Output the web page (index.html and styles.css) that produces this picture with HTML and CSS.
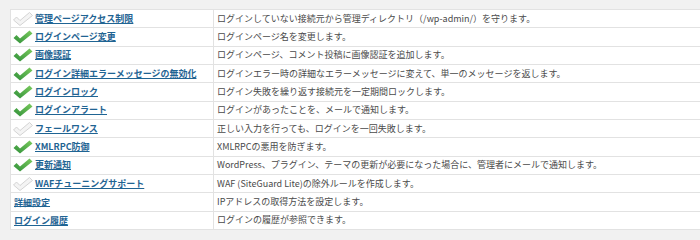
FILE: index.html
```html
<!DOCTYPE html>
<html lang="ja">
<head>
<meta charset="utf-8">
<link rel="stylesheet" href="styles.css">
</head>
<body>
<svg width="0" height="0" class="defs">
  <defs>
    <linearGradient id="g" x1="0" y1="1" x2="1" y2="0">
      <stop offset="0" stop-color="#2f8f3a"/>
      <stop offset="1" stop-color="#7acb5c"/>
    </linearGradient>
    <symbol id="chk" viewBox="0 0 20 14">
      <polygon points="0.5,8 3.5,5 7,8.5 16.5,0.5 19.5,3.5 7,13.5"/>
    </symbol>
  </defs>
</svg>
<div class="wrap">
<table class="feat">
  <tr><td class="name"><svg class="ic off"><use href="#chk"/></svg><a href="#">管理ページアクセス制限</a></td><td class="desc">ログインしていない接続元から管理ディレクトリ（/wp-admin/）を守ります。</td></tr>
  <tr><td class="name"><svg class="ic on"><use href="#chk"/></svg><a href="#">ログインページ変更</a></td><td class="desc">ログインページ名を変更します。</td></tr>
  <tr><td class="name"><svg class="ic on"><use href="#chk"/></svg><a href="#">画像認証</a></td><td class="desc">ログインページ、コメント投稿に画像認証を追加します。</td></tr>
  <tr><td class="name"><svg class="ic on"><use href="#chk"/></svg><a href="#">ログイン詳細エラーメッセージの無効化</a></td><td class="desc">ログインエラー時の詳細なエラーメッセージに変えて、単一のメッセージを返します。</td></tr>
  <tr><td class="name"><svg class="ic on"><use href="#chk"/></svg><a href="#">ログインロック</a></td><td class="desc">ログイン失敗を繰り返す接続元を一定期間ロックします。</td></tr>
  <tr><td class="name"><svg class="ic on"><use href="#chk"/></svg><a href="#">ログインアラート</a></td><td class="desc">ログインがあったことを、メールで通知します。</td></tr>
  <tr><td class="name"><svg class="ic off"><use href="#chk"/></svg><a href="#">フェールワンス</a></td><td class="desc">正しい入力を行っても、ログインを一回失敗します。</td></tr>
  <tr><td class="name"><svg class="ic on"><use href="#chk"/></svg><a href="#">XMLRPC防御</a></td><td class="desc">XMLRPCの悪用を防ぎます。</td></tr>
  <tr><td class="name"><svg class="ic on"><use href="#chk"/></svg><a href="#">更新通知</a></td><td class="desc">WordPress、プラグイン、テーマの更新が必要になった場合に、管理者にメールで通知します。</td></tr>
  <tr><td class="name"><svg class="ic off"><use href="#chk"/></svg><a href="#">WAFチューニングサポート</a></td><td class="desc">WAF (SiteGuard Lite)の除外ルールを作成します。</td></tr>
  <tr><td class="name plain"><a href="#">詳細設定</a></td><td class="desc">IPアドレスの取得方法を設定します。</td></tr>
  <tr><td class="name plain"><a href="#">ログイン履歴</a></td><td class="desc">ログインの履歴が参照できます。</td></tr>
</table>
</div>
</body>
</html>
```
FILE: styles.css
```css
html, body {
  margin: 0;
  padding: 0;
  background: #f1f1f1;
  overflow: hidden;
}
.defs {
  position: absolute;
}
.wrap {
  padding: 9px 0 0 10px;
  font-family: "Noto Sans CJK JP", "Noto Sans", sans-serif;
  font-size: 9px;
}
.feat {
  border-collapse: collapse;
  width: 700px;
  background: #fff;
  border: 1px solid #e2e2e2;
  box-shadow: 0 2px 0 #e6e6e6;
}
.feat td {
  border: 1px solid #e2e2e2;
  height: 18.33px;
  padding: 0 3px;
  box-sizing: border-box;
  vertical-align: middle;
  white-space: nowrap;
  line-height: 12px;
}
.name {
  width: 203px;
}
.name.plain {
  padding-left: 3px;
}
.name a {
  color: #1f6493;
  text-decoration: underline;
  font-weight: bold;
  vertical-align: middle;
}
.desc {
  color: #4a4a4a;
}
.ic {
  width: 20px;
  height: 14px;
  vertical-align: middle;
  margin: 0 2px 0 -1px;
}
.ic.on {
  fill: url(#g);
}
.ic.off {
  fill: #f4f4f4;
  stroke: #cfcfcf;
  stroke-width: 0.9;
}
```
